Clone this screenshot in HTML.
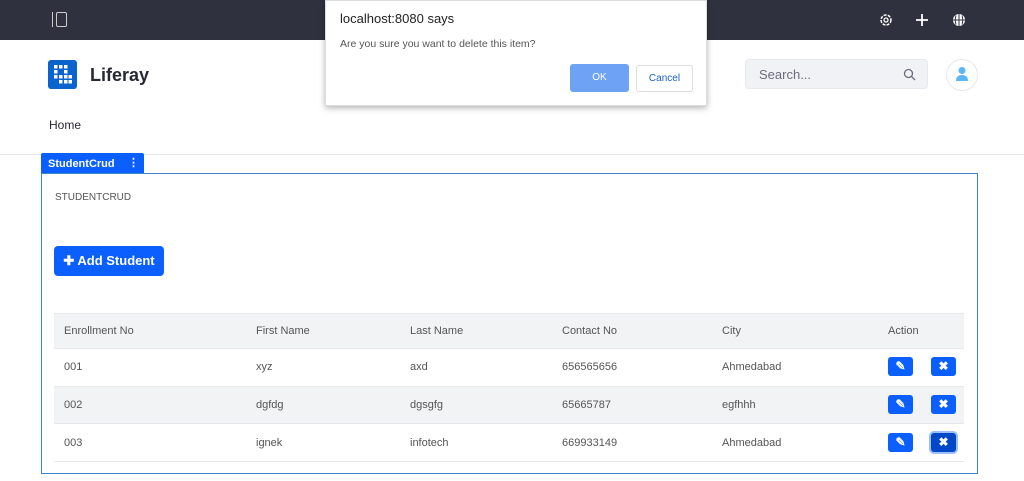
<!DOCTYPE html>
<html><head><style>
*{box-sizing:border-box;margin:0;padding:0}
body{width:1024px;height:481px;overflow:hidden;background:#fff;font-family:"Liberation Sans",sans-serif;position:relative;color:#333}
.top{position:absolute;left:0;top:0;width:1024px;height:40px;background:#30313f}
.abs{position:absolute}
.btn{position:absolute;width:25px;height:19px;background:#0b5fff;border-radius:3px;color:#fff;font-size:12px;text-align:center;line-height:19px;font-weight:bold}
</style></head><body>
<div class="top"></div>
<div class="abs" style="left:52px;top:12px;width:3px;height:15px;border-left:1px solid #ccc"></div>
<div class="abs" style="left:56px;top:12px;width:11px;height:15px;border:1.5px solid #ccc;border-radius:2px"></div>
<svg class="abs" style="left:878px;top:12px" width="16" height="16" viewBox="0 0 16 16"><circle cx="8" cy="8" r="5" fill="none" stroke="#fff" stroke-width="1.5" stroke-dasharray="3 1.2"/><circle cx="8" cy="8" r="2" fill="none" stroke="#fff" stroke-width="1.3"/></svg>
<svg class="abs" style="left:914px;top:12px" width="16" height="16"><path d="M8 2v12M2 8h12" stroke="#fff" stroke-width="1.8"/></svg>
<svg class="abs" style="left:951px;top:12px" width="16" height="16"><circle cx="8" cy="8" r="6" fill="#fff"/><path d="M8 2v12M2 8h12M5 3.5q-1.5 4.5 0 9M11 3.5q1.5 4.5 0 9" stroke="#30313f" stroke-width="1" fill="none"/></svg>
<div class="abs" style="left:48px;top:60px;width:29px;height:29px;background:#0b63ce;border-radius:3px"></div>
<svg class="abs" style="left:52px;top:64px" width="21" height="21"><g fill="#fff"><rect x="2" y="1" width="3.5" height="3.5"/><rect x="7" y="1" width="3.5" height="3.5"/><rect x="12" y="1" width="3.5" height="3.5"/><rect x="2" y="6" width="3.5" height="3.5"/><rect x="12" y="6" width="3.5" height="3.5"/><rect x="2" y="11" width="3.5" height="3.5"/><rect x="7" y="11" width="3.5" height="3.5"/><rect x="12" y="11" width="3.5" height="3.5"/><rect x="16.5" y="11" width="3.5" height="3.5"/><rect x="7" y="16" width="3.5" height="3.5"/><rect x="12" y="16" width="3.5" height="3.5"/><rect x="16.5" y="16" width="3.5" height="3.5"/></g></svg>
<div class="abs" style="left:90px;top:65px;font-size:18px;font-weight:bold;color:#272833">Liferay</div>
<div class="abs" style="left:745px;top:59px;width:183px;height:30px;background:#f1f2f5;border-radius:4px;border:1px solid #e7e7ed"></div>
<div class="abs" style="left:759px;top:67px;font-size:13px;color:#6b6c7e">Search...</div>
<svg class="abs" style="left:903px;top:68px" width="13" height="13"><circle cx="5.5" cy="5.5" r="4" fill="none" stroke="#6b6c7e" stroke-width="1.3"/><path d="M8.5 8.5l3.5 3.5" stroke="#6b6c7e" stroke-width="1.3"/></svg>
<div class="abs" style="left:946px;top:59px;width:32px;height:32px;border:1px solid #e7e7ed;border-radius:50%"></div>
<svg class="abs" style="left:955px;top:66px" width="14" height="16"><circle cx="7" cy="4.5" r="3.5" fill="#5cb5f5"/><path d="M1 15q0-6 6-6t6 6z" fill="#5cb5f5"/></svg>
<div class="abs" style="left:49px;top:118px;font-size:12px;color:#272833">Home</div>
<div class="abs" style="left:0;top:154px;width:1024px;height:1px;background:#e7e7ed"></div>
<div class="abs" style="left:41px;top:153px;width:103px;height:20px;background:#0b5fff;border-radius:2px 2px 0 0;color:#fff;font-size:11px;font-weight:bold;padding:5px 7px">StudentCrud<span style="position:absolute;left:87px;top:3px">⋮</span></div>
<div class="abs" style="left:41px;top:173px;width:937px;height:301px;border:1px solid #3f86c8"></div>
<div class="abs" style="left:55px;top:192px;font-size:10px;color:#555">STUDENTCRUD</div>
<div class="abs" style="left:54px;top:246px;width:110px;height:30px;background:#0b5fff;border-radius:4px;color:#fff;font-size:13px;font-weight:bold;line-height:30px;text-align:center">✚ Add Student</div>
<div class="abs" style="left:54px;top:313px;width:910px;height:35px;background:#f2f3f5;border-top:1px solid #e7e7ed"></div>
<div class="abs" style="left:54px;top:386px;width:910px;height:37px;background:#f2f3f5"></div>
<div class="abs" style="left:54px;top:348px;width:910px;height:1px;background:#e7e7ed"></div>
<div class="abs" style="left:54px;top:386px;width:910px;height:1px;background:#e7e7ed"></div>
<div class="abs" style="left:54px;top:423px;width:910px;height:1px;background:#e7e7ed"></div>
<div class="abs" style="left:54px;top:461px;width:910px;height:1px;background:#e7e7ed"></div>
<div style="font-size:11px;color:#555">
<div class="abs" style="left:64px;top:325px">Enrollment No</div><div class="abs" style="left:256px;top:325px">First Name</div><div class="abs" style="left:410px;top:325px">Last Name</div><div class="abs" style="left:562px;top:325px">Contact No</div><div class="abs" style="left:722px;top:325px">City</div><div class="abs" style="left:888px;top:325px">Action</div>
<div class="abs" style="left:64px;top:361px">001</div><div class="abs" style="left:256px;top:361px">xyz</div><div class="abs" style="left:410px;top:361px">axd</div><div class="abs" style="left:562px;top:361px">656565656</div><div class="abs" style="left:722px;top:361px">Ahmedabad</div>
<div class="abs" style="left:64px;top:399px">002</div><div class="abs" style="left:256px;top:399px">dgfdg</div><div class="abs" style="left:410px;top:399px">dgsgfg</div><div class="abs" style="left:562px;top:399px">65665787</div><div class="abs" style="left:722px;top:399px">egfhhh</div>
<div class="abs" style="left:64px;top:437px">003</div><div class="abs" style="left:256px;top:437px">ignek</div><div class="abs" style="left:410px;top:437px">infotech</div><div class="abs" style="left:562px;top:437px">669933149</div><div class="abs" style="left:722px;top:437px">Ahmedabad</div>
</div>
<div class="btn" style="left:888px;top:357px">✎</div><div class="btn" style="left:931px;top:357px">✖</div>
<div class="btn" style="left:888px;top:395px">✎</div><div class="btn" style="left:931px;top:395px">✖</div>
<div class="btn" style="left:888px;top:433px">✎</div><div class="btn" style="left:931px;top:433px;background:#0048c7;box-shadow:0 0 0 2px #9cc0f5">✖</div>
<div class="abs" style="left:325px;top:0;width:382px;height:106px;background:#fff;border:1px solid #ddd;box-shadow:0 2px 6px rgba(0,0,0,.3)"></div>
<div class="abs" style="left:340px;top:11px;font-size:13px;color:#222">localhost:8080 says</div>
<div class="abs" style="left:340px;top:38px;font-size:10.5px;color:#555">Are you sure you want to delete this item?</div>
<div class="abs" style="left:570px;top:64px;width:59px;height:28px;background:#6ea2f5;border-radius:3px;color:#fff;font-size:10px;text-align:center;line-height:28px">OK</div>
<div class="abs" style="left:636px;top:65px;width:57px;height:27px;border:1px solid #ddd;border-radius:3px;color:#1a5fcc;font-size:10px;text-align:center;line-height:25px">Cancel</div>
</body></html>
